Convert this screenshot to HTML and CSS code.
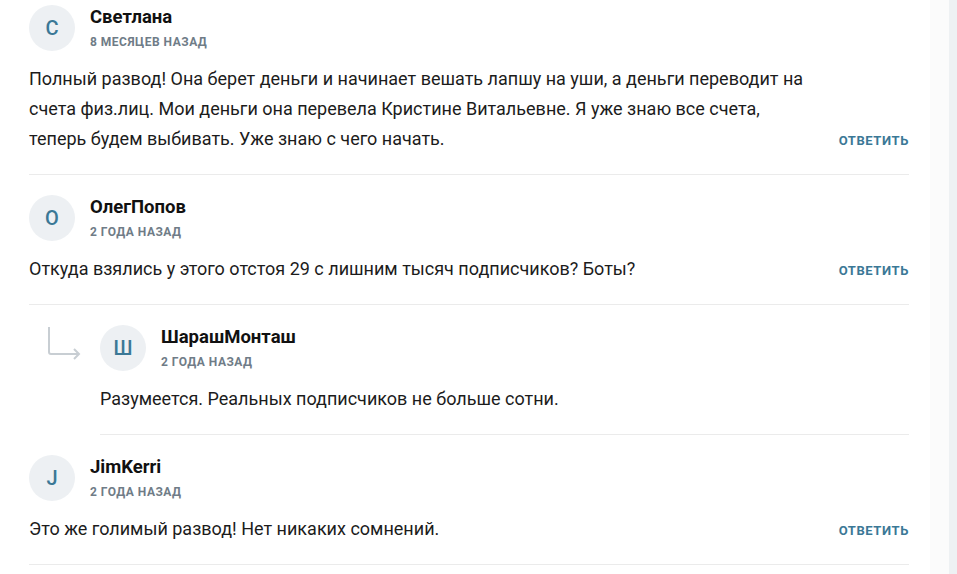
FILE: index.html
```html
<!DOCTYPE html>
<html lang="ru">
<head>
<meta charset="utf-8">
<link rel="stylesheet" href="styles.css">
</head>
<body>
<div class="page">
  <div class="comments">
    <div class="comment first">
      <div class="head">
        <div class="avatar">С</div>
        <div class="meta">
          <div class="name">Светлана</div>
          <div class="date">8 месяцев назад</div>
        </div>
      </div>
      <div class="body">
        <p class="text">Полный развод! Она берет деньги и начинает вешать лапшу на уши, а деньги переводит на счета физ.лиц. Мои деньги она перевела Кристине Витальевне. Я уже знаю все счета, теперь будем выбивать. Уже знаю с чего начать.</p>
        <a class="reply">Ответить</a>
      </div>
    </div>
    <div class="comment">
      <div class="head">
        <div class="avatar">О</div>
        <div class="meta">
          <div class="name">ОлегПопов</div>
          <div class="date">2 года назад</div>
        </div>
      </div>
      <div class="body">
        <p class="text">Откуда взялись у этого отстоя 29 с лишним тысяч подписчиков? Боты?</p>
        <a class="reply">Ответить</a>
      </div>
    </div>
    <div class="comment child">
      <svg class="arrow" width="36" height="34" viewBox="0 0 36 34">
        <path d="M2 1 V26 Q2 28 4 28 H32" fill="none" stroke="#c8ced3" stroke-width="2"/>
        <path d="M27 23 L32 28 L27 33" fill="none" stroke="#c8ced3" stroke-width="2"/>
      </svg>
      <div class="inner">
        <div class="head">
          <div class="avatar">Ш</div>
          <div class="meta">
            <div class="name">ШарашМонташ</div>
            <div class="date">2 года назад</div>
          </div>
        </div>
        <div class="body">
          <p class="text">Разумеется. Реальных подписчиков не больше сотни.</p>
        </div>
      </div>
    </div>
    <div class="comment">
      <div class="head">
        <div class="avatar">J</div>
        <div class="meta">
          <div class="name">JimKerri</div>
          <div class="date">2 года назад</div>
        </div>
      </div>
      <div class="body">
        <p class="text">Это же голимый развод! Нет никаких сомнений.</p>
        <a class="reply">Ответить</a>
      </div>
    </div>
  </div>
  <div class="scrollbar"></div>
</div>
</body>
</html>
```
FILE: styles.css
```css
html, body {
  margin: 0;
  padding: 0;
  background: #ffffff;
  height: 100%;
  overflow: hidden;
}
body {
  font-family: Roboto, "Liberation Sans", sans-serif;
  color: #1a1a1a;
}
.page {
  display: flex;
  height: 574px;
}
.comments {
  flex: 1;
  padding: 0 40px 0 29px;
  background: linear-gradient(to right, #ffffff 930px, #fbfbfb 930px);
}
.scrollbar {
  width: 8px;
  background: #eef1f3;
}
.comment {
  border-bottom: 1px solid #ebebeb;
  padding: 20px 0 20px;
}
.comment.first {
  padding-top: 5px;
}
.head {
  display: flex;
  align-items: center;
  gap: 15px;
}
.avatar {
  width: 46px;
  height: 46px;
  border-radius: 50%;
  background: #edf0f3;
  color: #3b7896;
  font-size: 20px;
  font-weight: 500;
  display: flex;
  align-items: center;
  justify-content: center;
  flex: none;
}
.meta {
  display: flex;
  flex-direction: column;
  margin-top: 0;
}
.name {
  font-size: 18.5px;
  font-weight: 700;
  color: #111;
  line-height: 22px;
}
.date {
  font-size: 12px;
  font-weight: 700;
  color: #6f7c87;
  text-transform: uppercase;
  letter-spacing: 0.5px;
  line-height: 16px;
  margin-top: 6px;
}
.body {
  display: flex;
  align-items: flex-end;
  justify-content: space-between;
  gap: 20px;
  margin-top: 13px;
}
.text {
  margin: 0;
  font-size: 18px;
  line-height: 30px;
  max-width: 790px;
  color: #1c1c1c;
}
.reply {
  font-size: 13px;
  font-weight: 700;
  color: #3b7896;
  text-transform: uppercase;
  letter-spacing: 0.6px;
  line-height: 30px;
  margin-bottom: -2px;
  flex: none;
}
.comment.child {
  display: flex;
  align-items: flex-start;
  margin-left: 71px;
  padding-left: 0;
  position: relative;
}
.comment.child .arrow {
  position: absolute;
  left: -53px;
  top: 21px;
}
.comment.child .inner {
  flex: 1;
}
```
